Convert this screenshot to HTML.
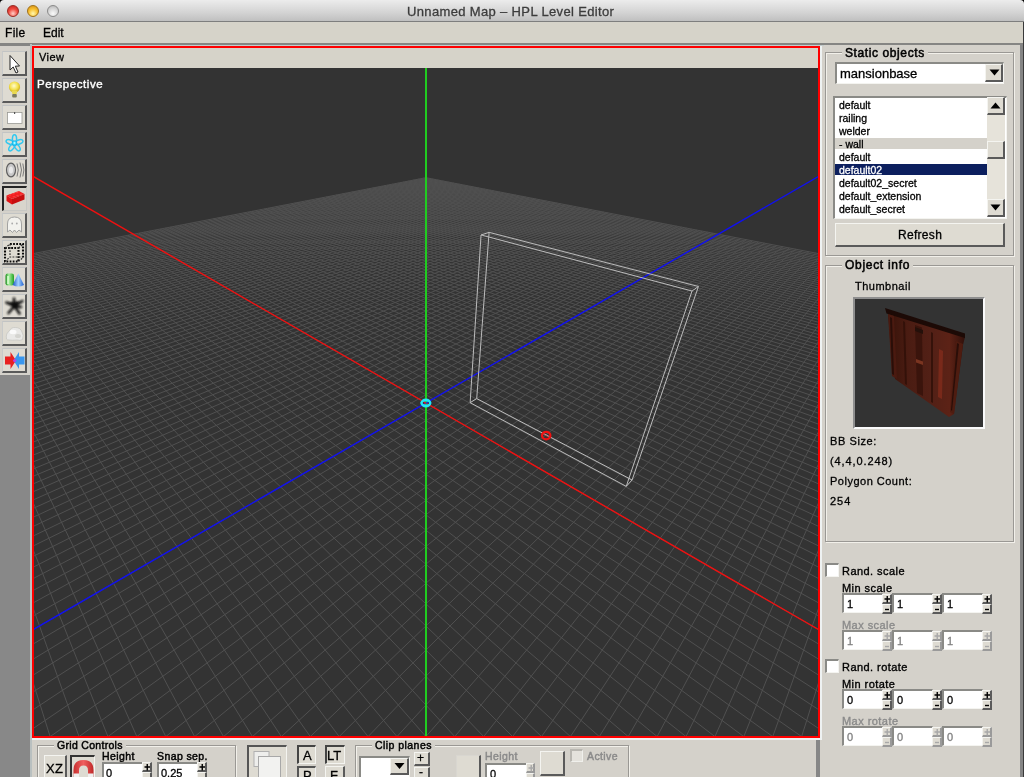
<!DOCTYPE html>
<html><head><meta charset="utf-8"><style>
html,body{margin:0;padding:0}
*{-webkit-font-smoothing:antialiased}
body{width:1024px;height:777px;overflow:hidden;position:relative;background:#d4d1ca;font-family:"Liberation Sans",sans-serif;color:#000}
.a{position:absolute}
.t{position:absolute;white-space:nowrap;line-height:1;will-change:transform;-webkit-text-stroke-width:0.3px}
.btn{position:absolute;box-sizing:border-box;background:#dedbd2;border-top:1px solid #f4f4f0;border-left:1px solid #f4f4f0;border-right:2px solid #5a5a5a;border-bottom:2px solid #5a5a5a}
.btnp{position:absolute;box-sizing:border-box;background:#dedbd2;border-top:2px solid #5a5a5a;border-left:2px solid #5a5a5a;border-right:1px solid #f4f4f0;border-bottom:1px solid #f4f4f0}
.grp{position:absolute;box-sizing:border-box;border:1px solid #9a9894;box-shadow:1px 1px 0 #f2f0ea, inset 1px 1px 0 #f2f0ea}
.gl{position:absolute;background:#d4d1ca;padding:0 3px;white-space:nowrap;line-height:1;will-change:transform;-webkit-text-stroke-width:0.3px}
.inp{position:absolute;box-sizing:border-box;background:#fff;border-top:2px solid #8a8a86;border-left:2px solid #8a8a86;border-bottom:1px solid #f4f4f0;border-right:1px solid #f4f4f0}
</style></head><body>
<!-- title bar -->
<div class="a" style="left:0;top:0;width:1024px;height:6px;background:#000"></div>
<div class="a" style="left:0;top:0;width:1024px;height:22px;border-radius:4px 4px 0 0;background:linear-gradient(#ececec,#d2d2d2 60%,#bdbdbd)"></div>
<div class="a" style="left:0;top:21px;width:1024px;height:1px;background:#7e7e7e"></div>
<div class="a" style="left:7px;top:5px;width:12px;height:12px;box-sizing:border-box;border:1px solid #9a2a22;border-radius:50%;background:radial-gradient(circle at 50% 75%,#ffd0c8,#f04a40 50%,#c0201a)"></div>
<div class="a" style="left:27px;top:5px;width:12px;height:12px;box-sizing:border-box;border:1px solid #a07018;border-radius:50%;background:radial-gradient(circle at 50% 75%,#fff8b0,#f8c030 50%,#d08a10)"></div>
<div class="a" style="left:47px;top:5px;width:12px;height:12px;box-sizing:border-box;border:1px solid #8a8a8a;border-radius:50%;background:radial-gradient(circle at 50% 75%,#fafafa,#d8d8d8 50%,#b0b0b0)"></div>
<div class="t" style="left:407px;top:5px;font-size:13px;letter-spacing:0.35px;color:#3c3c3c">Unnamed Map – HPL Level Editor</div>
<!-- menu bar -->
<div class="a" style="left:0;top:22px;width:1024px;height:21px;background:#d6d3c9"></div>
<div class="a" style="left:0;top:43px;width:1024px;height:2px;background:#858583"></div>
<div class="a" style="left:30px;top:45px;width:794px;height:1px;background:#c4cccc"></div>
<div class="t" style="left:5px;top:27px;font-size:12px;letter-spacing:0.3px">File</div>
<div class="t" style="left:43px;top:27px;font-size:12px">Edit</div>
<!-- left toolbar -->
<div class="a" style="left:0;top:46px;width:30px;height:329px;background:#d4d1ca"></div>
<div class="a" style="left:0;top:43px;width:30px;height:3px;background:#858583"></div>
<div class="a" style="left:0;top:375px;width:30px;height:402px;background:#888888"></div>
<div class="a" style="left:30px;top:44px;width:2px;height:733px;background:#b9c0c0"></div>
<div class="btn" style="border-top-color:#c2c4c4;border-left-color:#c8caca;left:2px;top:51px;width:25px;height:25px"></div>
<div class="btn" style="border-top-color:#c2c4c4;border-left-color:#c8caca;left:2px;top:78px;width:25px;height:25px"></div>
<div class="btn" style="border-top-color:#c2c4c4;border-left-color:#c8caca;left:2px;top:105px;width:25px;height:25px"></div>
<div class="btn" style="border-top-color:#c2c4c4;border-left-color:#c8caca;left:2px;top:132px;width:25px;height:25px"></div>
<div class="btn" style="border-top-color:#c2c4c4;border-left-color:#c8caca;left:2px;top:159px;width:25px;height:25px"></div>
<div class="btnp" style="left:2px;top:186px;width:25px;height:25px;background:#d8d5cc;border-top-color:#252525;border-left-color:#252525;border-right-color:#c8c8c4;border-bottom-color:#c8c8c4"></div>
<div class="btn" style="border-top-color:#c2c4c4;border-left-color:#c8caca;left:2px;top:213px;width:25px;height:25px"></div>
<div class="btn" style="border-top-color:#c2c4c4;border-left-color:#c8caca;left:2px;top:240px;width:25px;height:25px"></div>
<div class="btn" style="border-top-color:#c2c4c4;border-left-color:#c8caca;left:2px;top:267px;width:25px;height:25px"></div>
<div class="btn" style="border-top-color:#c2c4c4;border-left-color:#c8caca;left:2px;top:294px;width:25px;height:25px"></div>
<div class="btn" style="border-top-color:#c2c4c4;border-left-color:#c8caca;left:2px;top:321px;width:25px;height:25px"></div>
<div class="btn" style="border-top-color:#c2c4c4;border-left-color:#c8caca;left:2px;top:348px;width:25px;height:25px"></div>
<svg class="a" style="left:0;top:44px" width="30" height="331" viewBox="0 44 30 331">
<defs>
<radialGradient id="bulb" cx="0.45" cy="0.4" r="0.6"><stop offset="0" stop-color="#fffbd0"/><stop offset="0.6" stop-color="#f3e04a"/><stop offset="1" stop-color="#c8a818"/></radialGradient>
<radialGradient id="atomc" cx="0.5" cy="0.5" r="0.5"><stop offset="0" stop-color="#ffffff"/><stop offset="0.5" stop-color="#40e0ff"/><stop offset="1" stop-color="#10a0e0"/></radialGradient>
<linearGradient id="cyl" x1="0" x2="1"><stop offset="0" stop-color="#1a8a1a"/><stop offset="0.4" stop-color="#a8f0a0"/><stop offset="1" stop-color="#20a020"/></linearGradient>
<linearGradient id="cone" x1="0" x2="1"><stop offset="0" stop-color="#1a50c0"/><stop offset="0.5" stop-color="#a0d0ff"/><stop offset="1" stop-color="#2060d0"/></linearGradient>
</defs>
<!-- 1 arrow -->
<path d="M10 55.5 L10 70 L13.2 67 L16 73 L18 72 L15.3 66.2 L19.5 66 Z" fill="#fff" stroke="#222" stroke-width="1" stroke-linejoin="round"/>
<!-- 2 bulb -->
<circle cx="14.5" cy="87" r="5.6" fill="url(#bulb)"/>
<path d="M11.8 91 L17.2 91 L16.6 94 L12.4 94 Z" fill="#e8d850"/>
<rect x="12.2" y="94" width="4.6" height="3.4" rx="1" fill="#7a7a60"/>
<!-- 3 box -->
<rect x="7.5" y="112.5" width="14.5" height="11" fill="#ffffff" stroke="#9a9a94" stroke-width="0.8"/>
<rect x="14" y="112" width="1.2" height="2" fill="#555"/>
<!-- 4 atom -->
<g fill="none" stroke="#30c8f0" stroke-width="1.5"><ellipse cx="14.50" cy="139.30" rx="4.6" ry="2.1" transform="rotate(-90 14.50 139.30)"/><ellipse cx="18.49" cy="142.20" rx="4.6" ry="2.1" transform="rotate(-18 18.49 142.20)"/><ellipse cx="16.97" cy="146.90" rx="4.6" ry="2.1" transform="rotate(54 16.97 146.90)"/><ellipse cx="12.03" cy="146.90" rx="4.6" ry="2.1" transform="rotate(126 12.03 146.90)"/><ellipse cx="10.51" cy="142.20" rx="4.6" ry="2.1" transform="rotate(198 10.51 142.20)"/></g>
<circle cx="14.5" cy="143" r="2.6" fill="url(#atomc)"/>
<!-- 5 speaker -->
<ellipse cx="11" cy="170" rx="4.5" ry="6.8" fill="#c8c8c8" stroke="#606060" stroke-width="1.2"/>
<ellipse cx="11" cy="170" rx="2" ry="3.5" fill="#e8e8e8"/>
<path d="M17 163.5 Q19.5 170 17 176.5 M20 162.5 Q23 170 20 177.5 M22.8 163.5 Q25 170 22.8 176.5" fill="none" stroke="#707070" stroke-width="0.9"/>
<!-- 6 brick -->
<path d="M6.5 195.5 L19 191 L24.5 194 L12 199 Z" fill="#f02020"/>
<path d="M6.5 195.5 L12 199 L12 204.5 L6.5 201 Z" fill="#e01414"/>
<path d="M12 199 L24.5 194 L24.5 199.5 L12 204.5 Z" fill="#c80e0e"/>
<g fill="#ff3a3a"><ellipse cx="10" cy="195" rx="1.4" ry="0.8"/><ellipse cx="13.5" cy="193.8" rx="1.4" ry="0.8"/><ellipse cx="17" cy="192.5" rx="1.4" ry="0.8"/><ellipse cx="14" cy="196.8" rx="1.4" ry="0.8"/><ellipse cx="17.5" cy="195.5" rx="1.4" ry="0.8"/><ellipse cx="21" cy="194.2" rx="1.4" ry="0.8"/></g>
<!-- 7 ghost -->
<path d="M7.5 232 L7.5 224 Q7.5 217 14.5 217 Q21.5 217 21.5 224 L21.5 232 L19 230 L16.5 232.5 L14.5 230 L12.5 232.5 L10 230 Z" fill="#f2f2ee" stroke="#9a9a9a" stroke-width="0.9"/>
<circle cx="12.2" cy="223.5" r="0.9" fill="#aaa"/><circle cx="16.8" cy="223.5" r="0.9" fill="#aaa"/>
<!-- 8 dashed cube -->
<g fill="none" stroke="#0a0a0a" stroke-width="2.1" stroke-dasharray="1.8 1.3">
<rect x="5" y="248" width="13.5" height="13.5"/>
<path d="M10 244 H23 V257.5"/>
<path d="M10 244 V257 H23 M5 248 L10 244 M18.5 248 L23 244 M18.5 261.5 L23 257.5 M5 261.5 L10 257" stroke-width="1.2" stroke="#333"/>
</g>
<!-- 9 cylinder + cone -->
<rect x="5.5" y="273.5" width="8.5" height="12" rx="2.2" fill="url(#cyl)"/>
<rect x="7.2" y="276" width="1.6" height="8" fill="#d8ffd0"/>
<path d="M18.3 273.5 L24 285 Q18.3 288 12.6 285 Z" fill="url(#cone)"/>
<!-- 10 splat -->
<defs><filter id="blr" x="-20%" y="-20%" width="140%" height="140%"><feGaussianBlur stdDeviation="0.8"/></filter></defs>
<g stroke="#111" stroke-linecap="round" filter="url(#blr)">
<path d="M14 298.5 L14.5 306 M6.5 302.5 L14.5 306 L22.5 301 M14.5 306 L8.5 313 M14.5 306 L19.5 313.5 M14.5 306 L21 307" stroke-width="2.6"/>
<circle cx="14.3" cy="306" r="2.8" fill="#111" stroke="none"/>
</g>
<!-- 11 cloud -->
<path d="M6.5 339 Q5.5 333 9.5 331 Q11 327 15.5 327.5 Q20.5 327.5 22 332 Q24 335 22.5 339.5 Q20 341 17 340 Q12 340.5 9 340 Q7 340 6.5 339 Z" fill="#e8e8e6" stroke="#c4c4c0" stroke-width="0.7"/>
<ellipse cx="13" cy="332" rx="3.5" ry="2.2" fill="#fafafa"/>
<ellipse cx="18" cy="336" rx="3" ry="2" fill="#d4d4d0"/>
<!-- 12 arrows -->
<path d="M5 356.5 L10.5 356.5 L10.5 352 L16 360.5 L10.5 369 L10.5 364.5 L5 364.5 Z" fill="#e82020"/>
<path d="M24.5 356.5 L19 356.5 L19 352 L13.5 360.5 L19 369 L19 364.5 L24.5 364.5 Z" fill="#2a90f0" opacity="0.92"/>
<circle cx="14.7" cy="360.5" r="1.6" fill="#c040e0"/>
</svg>

<!-- viewport frame -->
<div class="a" style="left:32px;top:46px;width:788px;height:692px;background:#ff0000"></div>
<div class="a" style="left:820px;top:46px;width:2px;height:694px;background:#eef2f2"></div>
<div class="a" style="left:32px;top:738px;width:790px;height:2px;background:#eef2f2"></div>
<div class="a" style="left:34px;top:48px;width:784px;height:20px;background:#d6d3c9"></div>
<div class="t" style="left:39px;top:52px;font-size:11px;letter-spacing:0.4px">View</div>
<svg class="a" style="left:34px;top:68px" width="784" height="668" viewBox="0 0 784 668">
<rect width="784" height="668" fill="#333333"/>
<path d="M-2.00 185.86L391.88 109.70M-2.00 187.45L394.33 110.17M-2.00 189.07L396.81 110.65M-2.00 190.71L399.30 111.13M-2.00 192.39L401.81 111.62M-2.00 194.09L404.34 112.11M-2.00 195.82L406.90 112.60M-2.00 197.58L409.48 113.10M-2.00 199.37L412.07 113.60M-2.00 201.20L414.70 114.11M-2.00 203.06L417.34 114.62M-2.00 204.95L420.01 115.14M-2.00 206.88L422.70 115.66M-2.00 208.84L425.41 116.18M-2.00 210.84L428.15 116.71M-2.00 212.88L430.91 117.25M-2.00 214.96L433.70 117.79M-2.00 217.07L436.51 118.33M-2.00 219.23L439.35 118.88M-2.00 221.43L442.22 119.43M-2.00 223.68L445.10 119.99M-2.00 225.97L448.02 120.56M-2.00 228.31L450.96 121.12M-2.00 230.69L453.93 121.70M-2.00 233.13L456.93 122.28M-2.00 235.61L459.95 122.86M-2.00 238.15L463.00 123.45M-2.00 240.75L466.09 124.05M-2.00 243.40L469.20 124.65M-2.00 246.10L472.33 125.26M-2.00 248.87L475.50 125.87M-2.00 251.70L478.70 126.49M-2.00 254.59L481.93 127.11M-2.00 257.55L485.19 127.74M-2.00 260.58L488.49 128.38M-2.00 263.68L491.81 129.02M-2.00 266.85L495.17 129.67M-2.00 270.10L498.56 130.33M-2.00 273.43L501.98 130.99M-2.00 276.84L505.44 131.66M-2.00 280.33L508.93 132.33M-2.00 283.92L512.46 133.02M-2.00 287.59L516.02 133.70M-2.00 291.36L519.62 134.40M-2.00 295.23L523.26 135.10M-2.00 299.20L526.93 135.81M-2.00 303.28L530.64 136.53M-2.00 610.91L16.57 670.00M-2.00 307.47L534.39 137.26M-2.00 536.94L45.53 670.00M-2.00 311.77L538.18 137.99M-2.00 478.86L74.50 670.00M-2.00 316.20L542.00 138.73M-2.00 432.05L103.46 670.00M-2.00 320.75L545.87 139.48M-2.00 393.51L132.43 670.00M-2.00 325.43L549.78 140.23M-2.00 361.24L161.39 670.00M-2.00 330.25L553.73 141.00M-2.00 333.81L190.36 670.00M-2.00 335.21L557.72 141.77M-2.00 310.22L219.32 670.00M-2.00 340.33L561.76 142.55M-2.00 289.71L248.29 670.00M-2.00 345.59L565.83 143.34M-2.00 271.71L277.25 670.00M-2.00 351.03L569.96 144.13M-2.00 255.80L306.22 670.00M-2.00 356.63L574.12 144.94M-2.00 241.62L335.18 670.00M-2.00 362.42L578.34 145.75M-2.00 228.91L364.15 670.00M-2.00 368.39L582.59 146.58M-2.00 217.45L393.11 670.00M-2.00 374.56L586.90 147.41M-2.00 207.07L422.08 670.00M-2.00 380.94L591.25 148.25M-2.00 197.61L451.04 670.00M-2.00 387.54L595.66 149.10M-2.00 188.97L480.01 670.00M-2.00 394.37L600.11 149.96M2.19 185.05L508.97 670.00M-2.00 401.44L604.61 150.83M8.90 183.76L537.94 670.00M-2.00 408.77L609.17 151.71M15.51 182.48L566.90 670.00M-2.00 416.36L613.77 152.60M22.04 181.21L595.86 670.00M-2.00 424.24L618.43 153.51M28.48 179.97L624.83 670.00M-2.00 432.43L623.15 154.42M34.83 178.74L653.79 670.00M-2.00 440.93L627.91 155.34M41.10 177.53L682.76 670.00M-2.00 449.77L632.74 156.27M47.28 176.33L711.72 670.00M-2.00 458.97L637.62 157.22M53.39 175.15L740.69 670.00M-2.00 468.55L642.56 158.17M59.41 173.99L769.65 670.00M-2.00 478.53L647.56 159.14M65.36 172.84L786.00 661.44M-2.00 488.95L652.61 160.12M71.23 171.70L786.00 642.60M-2.00 499.82L657.73 161.10M77.03 170.58L786.00 624.80M-2.00 511.19L662.91 162.11M82.75 169.48L786.00 607.95M-2.00 523.08L668.16 163.12M88.40 168.38L786.00 591.99M-2.00 535.53L673.47 164.15M93.98 167.30L786.00 576.83M-2.00 548.59L678.84 165.19M99.49 166.24L786.00 562.42M-2.00 562.29L684.28 166.24M104.93 165.19L786.00 548.72M-2.00 576.69L689.79 167.30M110.30 164.15L786.00 535.66M-2.00 591.85L695.37 168.38M115.61 163.12L786.00 523.20M-2.00 607.81L701.02 169.48M120.86 162.11L786.00 511.31M-2.00 624.65L706.74 170.58M126.04 161.10L786.00 499.94M-2.00 642.45L712.54 171.70M131.16 160.12L786.00 489.06M-2.00 661.29L718.41 172.84M136.21 159.14L786.00 478.64M14.12 670.00L724.36 173.99M141.21 158.17L786.00 468.66M43.08 670.00L730.38 175.15M146.15 157.22L786.00 459.08M72.05 670.00L736.49 176.33M151.03 156.27L786.00 449.88M101.01 670.00L742.67 177.53M155.86 155.34L786.00 441.03M129.98 670.00L748.94 178.74M160.62 154.42L786.00 432.53M158.94 670.00L755.29 179.97M165.34 153.51L786.00 424.35M187.91 670.00L761.73 181.21M170.00 152.60L786.00 416.46M216.87 670.00L768.26 182.48M174.60 151.71L786.00 408.86M245.83 670.00L774.87 183.76M179.16 150.83L786.00 401.53M274.80 670.00L781.58 185.05M183.66 149.96L786.00 394.46M303.76 670.00L786.00 188.74M188.11 149.10L786.00 387.63M332.73 670.00L786.00 197.37M192.52 148.25L786.00 381.03M361.69 670.00L786.00 206.82M196.87 147.41L786.00 374.65M390.66 670.00L786.00 217.19M201.18 146.58L786.00 368.48M419.62 670.00L786.00 228.63M205.43 145.75L786.00 362.50M448.59 670.00L786.00 241.32M209.65 144.94L786.00 356.72M477.55 670.00L786.00 255.49M213.81 144.13L786.00 351.11M506.52 670.00L786.00 271.38M217.94 143.34L786.00 345.68M535.48 670.00L786.00 289.36M222.01 142.55L786.00 340.41M564.45 670.00L786.00 309.84M226.05 141.77L786.00 335.29M593.41 670.00L786.00 333.41M230.04 141.00L786.00 330.33M622.38 670.00L786.00 360.80M233.99 140.23L786.00 325.51M651.34 670.00L786.00 393.04M237.90 139.48L786.00 320.82M680.31 670.00L786.00 431.53M241.77 138.73L786.00 316.27M709.27 670.00L786.00 478.29M245.59 137.99L786.00 311.84M738.24 670.00L786.00 536.30M249.38 137.26L786.00 307.54M767.20 670.00L786.00 610.18M253.13 136.53L786.00 303.35M256.84 135.81L786.00 299.27M260.51 135.10L786.00 295.30M264.15 134.40L786.00 291.43M267.75 133.70L786.00 287.66M271.31 133.02L786.00 283.98M274.84 132.33L786.00 280.40M278.33 131.66L786.00 276.90M281.79 130.99L786.00 273.49M285.21 130.33L786.00 270.17M288.60 129.67L786.00 266.92M291.96 129.02L786.00 263.74M295.28 128.38L786.00 260.64M298.58 127.74L786.00 257.61M301.84 127.11L786.00 254.65M305.07 126.49L786.00 251.76M308.27 125.87L786.00 248.93M311.44 125.26L786.00 246.16M314.57 124.65L786.00 243.45M317.68 124.05L786.00 240.80M320.77 123.45L786.00 238.21M323.82 122.86L786.00 235.67M326.84 122.28L786.00 233.18M329.84 121.70L786.00 230.75M332.81 121.12L786.00 228.36M335.75 120.56L786.00 226.02M338.67 119.99L786.00 223.73M341.55 119.43L786.00 221.49M344.42 118.88L786.00 219.29M347.26 118.33L786.00 217.13M350.07 117.79L786.00 215.01M352.86 117.25L786.00 212.93M355.62 116.71L786.00 210.89M358.36 116.18L786.00 208.89M361.07 115.66L786.00 206.93M363.76 115.14L786.00 205.00M366.43 114.62L786.00 203.11M369.07 114.11L786.00 201.25M371.70 113.60L786.00 199.42M374.29 113.10L786.00 197.63M376.87 112.60L786.00 195.86M379.43 112.11L786.00 194.13M381.96 111.62L786.00 192.43M384.47 111.13L786.00 190.76M386.96 110.65L786.00 189.11M389.44 110.17L786.00 187.50M391.88 109.70L786.00 185.91" stroke="#505050" stroke-width="1" fill="none"/>
<path d="M-2.00 107.67L786.00 562.42" stroke="#f01010" stroke-width="1.4" fill="none"/>
<path d="M-2.00 562.29L786.00 107.54" stroke="#1010f0" stroke-width="1.4" fill="none"/>
<rect x="391" y="0" width="2" height="668" fill="#20cc20"/>
<path d="M436.13 334.66L442.72 330.55M436.13 334.66L447.06 166.93M436.13 334.66L592.25 418.36M442.72 330.55L455.09 164.35M442.72 330.55L598.09 411.99M447.06 166.93L455.09 164.35M447.06 166.93L658.03 223.01M455.09 164.35L664.43 218.49M592.25 418.36L598.09 411.99M592.25 418.36L658.03 223.01M598.09 411.99L664.43 218.49M658.03 223.01L664.43 218.49" stroke="#bcbcbc" stroke-width="1" fill="none"/>
<g transform="translate(391.88 334.98)"><ellipse cx="0" cy="0" rx="4.3" ry="3.2" fill="none" stroke="#22e4f8" stroke-width="2.4"/><ellipse cx="0" cy="0" rx="5.2" ry="2" fill="none" stroke="#22e4f8" stroke-width="0.8"/><circle cx="-0.8" cy="0" r="1" fill="#d02020"/><circle cx="0.8" cy="0" r="1" fill="#2040d0"/></g>
<g transform="translate(512.20 367.60)"><ellipse cx="0" cy="0" rx="4.2" ry="3.8" fill="none" stroke="#f01010" stroke-width="2.2"/><path d="M-3 -1.5 L3 1.5" stroke="#d04040" stroke-width="0.8"/></g>
</svg>
<div class="t" style="left:37px;top:79px;font-size:11.5px;letter-spacing:0.55px;color:#fff;-webkit-text-stroke:0.4px #fff">Perspective</div>
<!-- bottom panel -->
<div class="a" style="left:32px;top:740px;width:784px;height:37px;background:#d4d1ca"></div>
<div class="a" style="left:816px;top:740px;width:4px;height:37px;background:#868686"></div>
<!-- Grid controls group -->
<div class="grp" style="left:37px;top:745px;width:199px;height:60px"></div>
<div class="gl" style="left:54px;top:740px;font-size:10.5px;letter-spacing:0.3px;-webkit-text-stroke-width:0.45px">Grid Controls</div>
<div class="btn" style="left:44px;top:755px;width:23px;height:30px"></div>
<div class="t" style="left:46px;top:762px;font-size:13px;letter-spacing:0.3px">XZ</div>
<div class="btnp" style="left:70px;top:755px;width:25px;height:30px;border-top-color:#333;border-left-color:#333"></div>
<svg class="a" style="left:70px;top:755px" width="25" height="22" viewBox="0 0 25 22">
<defs><linearGradient id="mag" x1="0" x2="1"><stop offset="0" stop-color="#c83030"/><stop offset="0.5" stop-color="#f06060"/><stop offset="1" stop-color="#c02828"/></linearGradient></defs><path d="M3.5 22 L3.5 15 Q3.5 5 13.5 5 Q23.5 5 23.5 15 L23.5 22 L18 22 L18 15.5 Q18 10.5 13.5 10.5 Q9 10.5 9 15.5 L9 22 Z" fill="url(#mag)"/>
<path d="M3.5 18.5 L9 18.5 L9 22 L3.5 22 Z M18 18.5 L23.5 18.5 L23.5 22 L18 22 Z" fill="#f0f0f0"/>
</svg>
<div class="t" style="left:102px;top:751px;font-size:10.5px;letter-spacing:0.4px;-webkit-text-stroke-width:0.45px">Height</div>
<div class="inp" style="left:102px;top:762px;width:41px;height:20px"></div>
<div class="t" style="left:106px;top:768px;font-size:11px">0</div>
<div class="btn" style="left:142px;top:762px;width:10px;height:10px"></div>
<svg class="a" style="left:142px;top:762px" width="10" height="20" viewBox="0 0 10 20"><path d="M2.5 5 H8 M5.25 2 V8.5" stroke="#000" stroke-width="1.4"/><path d="M3 15.5 H7" stroke="#000" stroke-width="1.4"/></svg>
<div class="btn" style="left:142px;top:772px;width:10px;height:10px"></div>
<div class="t" style="left:157px;top:751px;font-size:10.5px;letter-spacing:0.4px;-webkit-text-stroke-width:0.45px">Snap sep.</div>
<div class="inp" style="left:157px;top:762px;width:41px;height:20px"></div>
<div class="t" style="left:161px;top:768px;font-size:11px">0.25</div>
<div class="btn" style="left:197px;top:762px;width:10px;height:10px"></div>
<svg class="a" style="left:197px;top:762px" width="10" height="20" viewBox="0 0 10 20"><path d="M2.5 5 H8 M5.25 2 V8.5" stroke="#000" stroke-width="1.4"/><path d="M3 15.5 H7" stroke="#000" stroke-width="1.4"/></svg>
<div class="btn" style="left:197px;top:772px;width:10px;height:10px"></div>
<!-- big layer button -->
<div class="btnp" style="left:247px;top:745px;width:40px;height:40px;border-top-color:#555;border-left-color:#555"></div>
<svg class="a" style="left:249px;top:747px" width="38" height="30" viewBox="0 0 38 30">
<rect x="5" y="4.5" width="15" height="15" fill="#eeeeec" stroke="#b0b0b0" stroke-width="1"/>
<rect x="9.5" y="9.5" width="22" height="22" fill="#f2f2f0" stroke="#a8a8a8" stroke-width="1"/>
</svg>
<div class="btnp" style="left:297px;top:745px;width:19px;height:19px;border-top-color:#444;border-left-color:#444"></div>
<div class="t" style="left:303px;top:749px;font-size:13px">A</div>
<div class="btn" style="left:297px;top:766px;width:19px;height:19px;border-top:2px solid #555;border-left:2px solid #555;border-right:1px solid #eee;border-bottom:1px solid #eee"></div>
<div class="t" style="left:303px;top:769px;font-size:13px">P</div>
<div class="btnp" style="left:325px;top:745px;width:20px;height:19px;border-top-color:#444;border-left-color:#444"></div>
<div class="t" style="left:327px;top:749px;font-size:13px">LT</div>
<div class="btn" style="left:325px;top:766px;width:20px;height:19px"></div>
<div class="t" style="left:330px;top:769px;font-size:13px">F</div>
<!-- clip planes group -->
<div class="grp" style="left:355px;top:745px;width:274px;height:60px"></div>
<div class="gl" style="left:372px;top:740px;font-size:10.5px;letter-spacing:0.45px;-webkit-text-stroke-width:0.45px">Clip planes</div>
<div class="inp" style="left:359px;top:756px;width:51px;height:25px"></div>
<div class="btn" style="left:390px;top:758px;width:19px;height:17px"></div>
<svg class="a" style="left:393px;top:762px" width="13" height="8" viewBox="0 0 13 8"><path d="M1.5 1 L11.5 1 L6.5 7 Z" fill="#000"/></svg>
<div class="btn" style="left:414px;top:752px;width:16px;height:14px"></div>
<div class="t" style="left:417px;top:752px;font-size:12px">+</div>
<div class="btn" style="left:414px;top:767px;width:16px;height:14px"></div>
<div class="t" style="left:419px;top:766px;font-size:12px">-</div>
<div class="btn" style="left:456px;top:755px;width:25px;height:30px;border-top-color:#d8d6d0;border-left-color:#d8d6d0"></div>
<div class="t" style="left:485px;top:751px;font-size:10.5px;letter-spacing:0.4px;-webkit-text-stroke-width:0.45px;color:#8a8a8a">Height</div>
<div class="inp" style="left:485px;top:763px;width:42px;height:20px"></div>
<div class="t" style="left:490px;top:769px;font-size:11px">0</div>
<div class="btn" style="left:526px;top:763px;width:9px;height:10px;border-right-color:#999;border-bottom-color:#999"></div>
<svg class="a" style="left:526px;top:763px" width="10" height="20" viewBox="0 0 10 20"><path d="M2.5 5 H8 M5.25 2 V8.5" stroke="#a8a8a8" stroke-width="1.4"/><path d="M3 15.5 H7" stroke="#a8a8a8" stroke-width="1.4"/></svg>
<div class="btn" style="left:526px;top:773px;width:9px;height:10px;border-right-color:#999;border-bottom-color:#999"></div>
<div class="btn" style="left:540px;top:751px;width:25px;height:25px"></div>
<div class="a" style="left:570px;top:749px;width:13px;height:13px;box-sizing:border-box;background:#e4e2dc;border-top:2px solid #b8b6b0;border-left:2px solid #b8b6b0;border-right:1px solid #f0f0ec;border-bottom:1px solid #f0f0ec"></div>
<div class="t" style="left:587px;top:751px;font-size:10.5px;letter-spacing:0.4px;-webkit-text-stroke-width:0.45px;color:#8a8a8a">Active</div>

<!-- right panel -->
<div class="a" style="left:1020px;top:44px;width:3px;height:733px;background:#858585"></div>
<div class="a" style="left:1023px;top:22px;width:1px;height:755px;background:#3a3a3a"></div>
<div class="grp" style="left:825px;top:52px;width:189px;height:204px"></div>
<div class="gl" style="left:842px;top:47px;font-size:12px;letter-spacing:0.6px;-webkit-text-stroke-width:0.5px">Static objects</div>
<div class="inp" style="left:835px;top:62px;width:169px;height:22px"></div>
<div class="t" style="left:840px;top:67px;font-size:13px">mansionbase</div>
<div class="btn" style="left:985px;top:64px;width:18px;height:18px"></div>
<svg class="a" style="left:988px;top:68px" width="13" height="9" viewBox="0 0 13 9"><path d="M1.5 1.5 L11.5 1.5 L6.5 7.5 Z" fill="#000"/></svg>
<div class="inp" style="left:833px;top:96px;width:174px;height:123px;background:#fff"></div>
<div class="a" style="left:987px;top:98px;width:18px;height:119px;background:#e6e3da"></div>
<div class="btn" style="left:987px;top:97px;width:18px;height:18px"></div>
<svg class="a" style="left:989px;top:101px" width="13" height="9" viewBox="0 0 13 9"><path d="M1.5 7.5 L11.5 7.5 L6.5 1.5 Z" fill="#000"/></svg>
<div class="btn" style="left:987px;top:141px;width:18px;height:18px"></div>
<div class="btn" style="left:987px;top:199px;width:18px;height:18px"></div>
<svg class="a" style="left:989px;top:203px" width="13" height="9" viewBox="0 0 13 9"><path d="M1.5 1.5 L11.5 1.5 L6.5 7.5 Z" fill="#000"/></svg>
<div class="a" style="left:835px;top:138px;width:152px;height:11px;background:#d4d1ca"></div>
<div class="a" style="left:835px;top:164px;width:152px;height:11px;background:#0c1f5e"></div>
<div class="t" style="left:839px;top:100px;font-size:10.5px;color:#000">default</div>
<div class="t" style="left:839px;top:113px;font-size:10.5px;color:#000">railing</div>
<div class="t" style="left:839px;top:126px;font-size:10.5px;color:#000">welder</div>
<div class="t" style="left:839px;top:139px;font-size:10.5px;color:#000">- wall</div>
<div class="t" style="left:839px;top:152px;font-size:10.5px;color:#000">default</div>
<div class="t" style="left:839px;top:165px;font-size:10.5px;color:#fff">default02</div>
<div class="t" style="left:839px;top:178px;font-size:10.5px;color:#000">default02_secret</div>
<div class="t" style="left:839px;top:191px;font-size:10.5px;color:#000">default_extension</div>
<div class="t" style="left:839px;top:204px;font-size:10.5px;color:#000">default_secret</div>
<div class="btn" style="left:835px;top:223px;width:170px;height:24px"></div>
<div class="t" style="left:898px;top:229px;font-size:12px;letter-spacing:0.3px">Refresh</div>
<div class="grp" style="left:825px;top:265px;width:189px;height:277px"></div>
<div class="gl" style="left:842px;top:259px;font-size:12px;letter-spacing:0.7px;-webkit-text-stroke-width:0.5px">Object info</div>
<div class="t" style="left:855px;top:281px;font-size:11px;letter-spacing:0.5px">Thumbnail</div>
<div class="a" style="left:853px;top:297px;width:132px;height:132px;box-sizing:border-box;background:#333;border-top:2px solid #8e8e8e;border-left:2px solid #8e8e8e;border-right:2px solid #fafafa;border-bottom:2px solid #fafafa"></div>
<svg class="a" style="left:855px;top:299px" width="128" height="128" viewBox="0 0 128 128">
<defs><linearGradient id="wood" x1="0" x2="1" y1="0" y2="0"><stop offset="0" stop-color="#361209"/><stop offset="0.25" stop-color="#4a1c12"/><stop offset="0.55" stop-color="#522016"/><stop offset="0.8" stop-color="#5c2216"/><stop offset="1" stop-color="#30100a"/></linearGradient></defs>
<path d="M33 13 L110 38 L108 46 L99 115 L94 118 L40 80 L35 40 Z" fill="url(#wood)"/>
<path d="M30 9 L110 34.5 L110 39 L31.5 14.5 Z" fill="#1c0a06"/>
<path d="M33 15 L39 17 L42 80 L37 77 Z" fill="#4a1a10"/>
<path d="M35 18 L37 19 L39 76 L37 75 Z" fill="#2a0e08"/>
<path d="M48 22 L50 23 L52 86 L50 85 Z" fill="#2e0f08" opacity="0.8"/>
<path d="M60 26 L67 28.5 L68 97 L62 94 Z" fill="#3a140c"/>
<path d="M60 28 L68 31 L68 35 L60 32 Z" fill="#24100a"/>
<path d="M61 60 L68 62.5 L68 66 L61 63.5 Z" fill="#7a3420"/>
<path d="M76 33 L78 34 L78 104 L76 103 Z" fill="#2e0f08" opacity="0.8"/>
<path d="M84 50 L88 52 L87 100 L83 98 Z" fill="#882e1c" opacity="0.7"/>
<path d="M101 42 L108 45 L99 115 L95 113 Z" fill="#4e1c10"/>
<path d="M102 44 L104 45 L97 112 L96 111 Z" fill="#2a0e08"/>
</svg>
<div class="t" style="left:830px;top:436px;font-size:11px;letter-spacing:0.6px">BB Size:</div>
<div class="t" style="left:830px;top:456px;font-size:11px;letter-spacing:0.9px">(4,4,0.248)</div>
<div class="t" style="left:830px;top:476px;font-size:11px;letter-spacing:0.5px">Polygon Count:</div>
<div class="t" style="left:830px;top:496px;font-size:11px;letter-spacing:1.0px">254</div>
<div class="a" style="left:825px;top:563px;width:14px;height:14px;box-sizing:border-box;background:#fff;border-top:2px solid #8a8a86;border-left:2px solid #8a8a86;border-right:1px solid #f4f4f0;border-bottom:1px solid #f4f4f0"></div>
<div class="t" style="left:842px;top:566px;font-size:11px;letter-spacing:0.45px;-webkit-text-stroke:0.35px #000">Rand. scale</div>
<div class="t" style="left:842px;top:583px;font-size:11px;letter-spacing:0.45px;-webkit-text-stroke:0.35px #000">Min scale</div>
<div class="inp" style="left:842px;top:593px;width:41px;height:20px"></div>
<div class="t" style="left:847px;top:599px;font-size:11px;color:#000">1</div>
<div class="btn" style="left:882px;top:594px;width:10px;height:10px;border-right-color:#5a5a5a;border-bottom-color:#5a5a5a"></div>
<div class="btn" style="left:882px;top:604px;width:10px;height:10px;border-right-color:#5a5a5a;border-bottom-color:#5a5a5a"></div>
<svg class="a" style="left:882px;top:594px" width="10" height="20" viewBox="0 0 10 20"><path d="M2.5 5 H8 M5.25 2 V8.5" stroke="#000" stroke-width="1.4"/><path d="M3 15.5 H7" stroke="#000" stroke-width="1.4"/></svg>
<div class="inp" style="left:892px;top:593px;width:41px;height:20px"></div>
<div class="t" style="left:897px;top:599px;font-size:11px;color:#000">1</div>
<div class="btn" style="left:932px;top:594px;width:10px;height:10px;border-right-color:#5a5a5a;border-bottom-color:#5a5a5a"></div>
<div class="btn" style="left:932px;top:604px;width:10px;height:10px;border-right-color:#5a5a5a;border-bottom-color:#5a5a5a"></div>
<svg class="a" style="left:932px;top:594px" width="10" height="20" viewBox="0 0 10 20"><path d="M2.5 5 H8 M5.25 2 V8.5" stroke="#000" stroke-width="1.4"/><path d="M3 15.5 H7" stroke="#000" stroke-width="1.4"/></svg>
<div class="inp" style="left:942px;top:593px;width:41px;height:20px"></div>
<div class="t" style="left:947px;top:599px;font-size:11px;color:#000">1</div>
<div class="btn" style="left:982px;top:594px;width:10px;height:10px;border-right-color:#5a5a5a;border-bottom-color:#5a5a5a"></div>
<div class="btn" style="left:982px;top:604px;width:10px;height:10px;border-right-color:#5a5a5a;border-bottom-color:#5a5a5a"></div>
<svg class="a" style="left:982px;top:594px" width="10" height="20" viewBox="0 0 10 20"><path d="M2.5 5 H8 M5.25 2 V8.5" stroke="#000" stroke-width="1.4"/><path d="M3 15.5 H7" stroke="#000" stroke-width="1.4"/></svg>
<div class="t" style="left:842px;top:620px;font-size:11px;letter-spacing:0.45px;color:#8a8a8a;-webkit-text-stroke:0.35px #8a8a8a">Max scale</div>
<div class="inp" style="left:842px;top:630px;width:41px;height:20px"></div>
<div class="t" style="left:847px;top:636px;font-size:11px;color:#808080">1</div>
<div class="btn" style="left:882px;top:631px;width:10px;height:10px;border-right-color:#9a9a9a;border-bottom-color:#9a9a9a"></div>
<div class="btn" style="left:882px;top:641px;width:10px;height:10px;border-right-color:#9a9a9a;border-bottom-color:#9a9a9a"></div>
<svg class="a" style="left:882px;top:631px" width="10" height="20" viewBox="0 0 10 20"><path d="M2.5 5 H8 M5.25 2 V8.5" stroke="#a8a8a8" stroke-width="1.4"/><path d="M3 15.5 H7" stroke="#a8a8a8" stroke-width="1.4"/></svg>
<div class="inp" style="left:892px;top:630px;width:41px;height:20px"></div>
<div class="t" style="left:897px;top:636px;font-size:11px;color:#808080">1</div>
<div class="btn" style="left:932px;top:631px;width:10px;height:10px;border-right-color:#9a9a9a;border-bottom-color:#9a9a9a"></div>
<div class="btn" style="left:932px;top:641px;width:10px;height:10px;border-right-color:#9a9a9a;border-bottom-color:#9a9a9a"></div>
<svg class="a" style="left:932px;top:631px" width="10" height="20" viewBox="0 0 10 20"><path d="M2.5 5 H8 M5.25 2 V8.5" stroke="#a8a8a8" stroke-width="1.4"/><path d="M3 15.5 H7" stroke="#a8a8a8" stroke-width="1.4"/></svg>
<div class="inp" style="left:942px;top:630px;width:41px;height:20px"></div>
<div class="t" style="left:947px;top:636px;font-size:11px;color:#808080">1</div>
<div class="btn" style="left:982px;top:631px;width:10px;height:10px;border-right-color:#9a9a9a;border-bottom-color:#9a9a9a"></div>
<div class="btn" style="left:982px;top:641px;width:10px;height:10px;border-right-color:#9a9a9a;border-bottom-color:#9a9a9a"></div>
<svg class="a" style="left:982px;top:631px" width="10" height="20" viewBox="0 0 10 20"><path d="M2.5 5 H8 M5.25 2 V8.5" stroke="#a8a8a8" stroke-width="1.4"/><path d="M3 15.5 H7" stroke="#a8a8a8" stroke-width="1.4"/></svg>
<div class="a" style="left:825px;top:659px;width:14px;height:14px;box-sizing:border-box;background:#fff;border-top:2px solid #8a8a86;border-left:2px solid #8a8a86;border-right:1px solid #f4f4f0;border-bottom:1px solid #f4f4f0"></div>
<div class="t" style="left:842px;top:662px;font-size:11px;letter-spacing:0.45px;-webkit-text-stroke:0.35px #000">Rand. rotate</div>
<div class="t" style="left:842px;top:679px;font-size:11px;letter-spacing:0.45px;-webkit-text-stroke:0.35px #000">Min rotate</div>
<div class="inp" style="left:842px;top:689px;width:41px;height:20px"></div>
<div class="t" style="left:847px;top:695px;font-size:11px;color:#000">0</div>
<div class="btn" style="left:882px;top:690px;width:10px;height:10px;border-right-color:#5a5a5a;border-bottom-color:#5a5a5a"></div>
<div class="btn" style="left:882px;top:700px;width:10px;height:10px;border-right-color:#5a5a5a;border-bottom-color:#5a5a5a"></div>
<svg class="a" style="left:882px;top:690px" width="10" height="20" viewBox="0 0 10 20"><path d="M2.5 5 H8 M5.25 2 V8.5" stroke="#000" stroke-width="1.4"/><path d="M3 15.5 H7" stroke="#000" stroke-width="1.4"/></svg>
<div class="inp" style="left:892px;top:689px;width:41px;height:20px"></div>
<div class="t" style="left:897px;top:695px;font-size:11px;color:#000">0</div>
<div class="btn" style="left:932px;top:690px;width:10px;height:10px;border-right-color:#5a5a5a;border-bottom-color:#5a5a5a"></div>
<div class="btn" style="left:932px;top:700px;width:10px;height:10px;border-right-color:#5a5a5a;border-bottom-color:#5a5a5a"></div>
<svg class="a" style="left:932px;top:690px" width="10" height="20" viewBox="0 0 10 20"><path d="M2.5 5 H8 M5.25 2 V8.5" stroke="#000" stroke-width="1.4"/><path d="M3 15.5 H7" stroke="#000" stroke-width="1.4"/></svg>
<div class="inp" style="left:942px;top:689px;width:41px;height:20px"></div>
<div class="t" style="left:947px;top:695px;font-size:11px;color:#000">0</div>
<div class="btn" style="left:982px;top:690px;width:10px;height:10px;border-right-color:#5a5a5a;border-bottom-color:#5a5a5a"></div>
<div class="btn" style="left:982px;top:700px;width:10px;height:10px;border-right-color:#5a5a5a;border-bottom-color:#5a5a5a"></div>
<svg class="a" style="left:982px;top:690px" width="10" height="20" viewBox="0 0 10 20"><path d="M2.5 5 H8 M5.25 2 V8.5" stroke="#000" stroke-width="1.4"/><path d="M3 15.5 H7" stroke="#000" stroke-width="1.4"/></svg>
<div class="t" style="left:842px;top:716px;font-size:11px;letter-spacing:0.45px;color:#8a8a8a;-webkit-text-stroke:0.35px #8a8a8a">Max rotate</div>
<div class="inp" style="left:842px;top:726px;width:41px;height:20px"></div>
<div class="t" style="left:847px;top:732px;font-size:11px;color:#808080">0</div>
<div class="btn" style="left:882px;top:727px;width:10px;height:10px;border-right-color:#9a9a9a;border-bottom-color:#9a9a9a"></div>
<div class="btn" style="left:882px;top:737px;width:10px;height:10px;border-right-color:#9a9a9a;border-bottom-color:#9a9a9a"></div>
<svg class="a" style="left:882px;top:727px" width="10" height="20" viewBox="0 0 10 20"><path d="M2.5 5 H8 M5.25 2 V8.5" stroke="#a8a8a8" stroke-width="1.4"/><path d="M3 15.5 H7" stroke="#a8a8a8" stroke-width="1.4"/></svg>
<div class="inp" style="left:892px;top:726px;width:41px;height:20px"></div>
<div class="t" style="left:897px;top:732px;font-size:11px;color:#808080">0</div>
<div class="btn" style="left:932px;top:727px;width:10px;height:10px;border-right-color:#9a9a9a;border-bottom-color:#9a9a9a"></div>
<div class="btn" style="left:932px;top:737px;width:10px;height:10px;border-right-color:#9a9a9a;border-bottom-color:#9a9a9a"></div>
<svg class="a" style="left:932px;top:727px" width="10" height="20" viewBox="0 0 10 20"><path d="M2.5 5 H8 M5.25 2 V8.5" stroke="#a8a8a8" stroke-width="1.4"/><path d="M3 15.5 H7" stroke="#a8a8a8" stroke-width="1.4"/></svg>
<div class="inp" style="left:942px;top:726px;width:41px;height:20px"></div>
<div class="t" style="left:947px;top:732px;font-size:11px;color:#808080">0</div>
<div class="btn" style="left:982px;top:727px;width:10px;height:10px;border-right-color:#9a9a9a;border-bottom-color:#9a9a9a"></div>
<div class="btn" style="left:982px;top:737px;width:10px;height:10px;border-right-color:#9a9a9a;border-bottom-color:#9a9a9a"></div>
<svg class="a" style="left:982px;top:727px" width="10" height="20" viewBox="0 0 10 20"><path d="M2.5 5 H8 M5.25 2 V8.5" stroke="#a8a8a8" stroke-width="1.4"/><path d="M3 15.5 H7" stroke="#a8a8a8" stroke-width="1.4"/></svg>
</body></html>
